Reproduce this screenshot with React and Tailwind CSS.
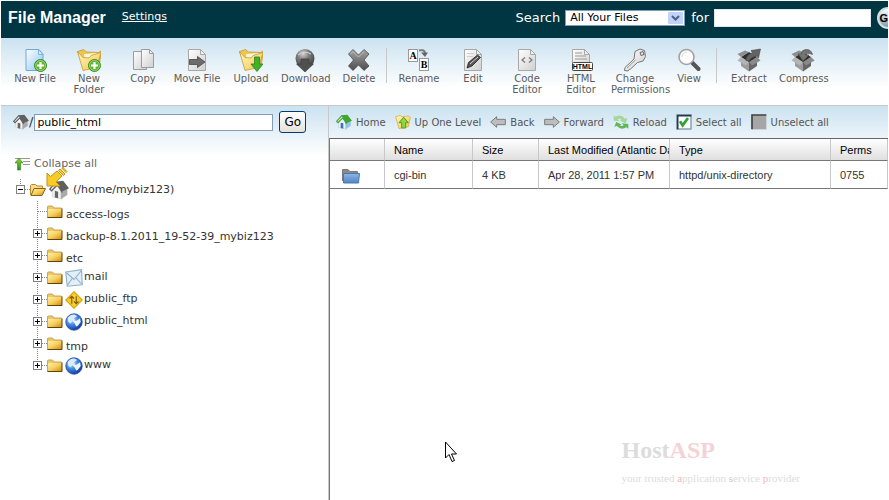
import React, { useState } from "react";

/* Shared gradients for the icons */
function IconDefs() {
  return (
    <svg className="absolute h-0 w-0" aria-hidden="true">
      <defs>
        <linearGradient id="gold" x1="0" y1="0" x2="1" y2="1">
          <stop offset="0" stopColor="#fdf0a6" />
          <stop offset="0.5" stopColor="#f7cf5e" />
          <stop offset="1" stopColor="#d08a10" />
        </linearGradient>
        <linearGradient id="paleGold" x1="0" y1="0" x2="1" y2="1">
          <stop offset="0" stopColor="#fff6bd" />
          <stop offset="1" stopColor="#f1c74f" />
        </linearGradient>
        <linearGradient id="paper" x1="0" y1="0" x2="1" y2="1">
          <stop offset="0" stopColor="#ffffff" />
          <stop offset="1" stopColor="#cfcfcf" />
        </linearGradient>
        <linearGradient id="bluePaper" x1="0" y1="0" x2="1" y2="1">
          <stop offset="0" stopColor="#ffffff" />
          <stop offset="1" stopColor="#8cc4ee" />
        </linearGradient>
        <linearGradient id="steel" x1="0" y1="0" x2="0" y2="1">
          <stop offset="0" stopColor="#a5a5a5" />
          <stop offset="1" stopColor="#4c4c4c" />
        </linearGradient>
        <radialGradient id="ball" cx="0.4" cy="0.25" r="0.8">
          <stop offset="0" stopColor="#d5d5d5" />
          <stop offset="0.4" stopColor="#7c7c7c" />
          <stop offset="1" stopColor="#383838" />
        </radialGradient>
        <radialGradient id="globe" cx="0.35" cy="0.3" r="0.8">
          <stop offset="0" stopColor="#c9e4ff" />
          <stop offset="0.5" stopColor="#3d83dc" />
          <stop offset="1" stopColor="#0a2b8c" />
        </radialGradient>
        <linearGradient id="green" x1="0" y1="0" x2="0" y2="1">
          <stop offset="0" stopColor="#8ed63c" />
          <stop offset="1" stopColor="#2c8a1a" />
        </linearGradient>
        <linearGradient id="blueFolder" x1="0" y1="0" x2="0" y2="1">
          <stop offset="0" stopColor="#8db6e6" />
          <stop offset="1" stopColor="#4f86c6" />
        </linearGradient>
      </defs>
    </svg>
  );
}

function Svg({ size = 24, children }) {
  return (
    <svg
      width={size}
      height={size}
      viewBox="0 0 24 24"
      className="block shrink-0"
      aria-hidden="true"
    >
      {children}
    </svg>
  );
}

function PlusBadge() {
  return (
    <g>
      <circle cx="17.5" cy="17.5" r="6" fill="#5fb336" stroke="#3a8a22" />
      <circle cx="17.5" cy="17.5" r="5" fill="none" stroke="#b4e08f" strokeWidth="0.7" />
      <path d="M17.5 14v7M14 17.5h7" stroke="#fff" strokeWidth="2.2" />
    </g>
  );
}

function Sheet() {
  return (
    <g>
      <path d="M3.5 1.5h12l5 5v16h-17z" fill="url(#paper)" stroke="#a8a8a8" />
      <path d="M15.5 1.5v5h5z" fill="#eee" stroke="#a8a8a8" />
    </g>
  );
}

function OpenFolder() {
  return (
    <g>
      <path d="M.5 3.500l6-2 3 2.500 12 .500 3-2-2 13-15 5z" fill="#efc452" stroke="#c39a34" strokeWidth="0.8" />
      <path d="M7 6l13-1 2 2-2 8H8z" fill="#fff8d6" />
      <path d="M.5 3.500L6 9.500l6 .5 2-2.500 10-3-4.500 15L6 22.500z" fill="url(#paleGold)" stroke="#c39a34" strokeWidth="0.8" />
    </g>
  );
}

function NewFileIcon() {
  return (
    <Svg>
      <path d="M3 1.500h13l4 4.500v16.500H3z" fill="url(#bluePaper)" stroke="#6fa8d4" />
      <path d="M15.500 1.500v5h4.500z" fill="#d8ecfa" stroke="#6fa8d4" strokeWidth="0.8" />
      <PlusBadge />
    </Svg>
  );
}

function NewFolderIcon() {
  return (
    <Svg>
      <OpenFolder />
      <PlusBadge />
    </Svg>
  );
}

function CopyIcon() {
  return (
    <Svg>
      <path d="M2.5 3.500h9l4 4v14h-13z" fill="url(#paper)" stroke="#9c9c9c" />
      <path d="M10.500 1.500h8l4 4v14h-12z" fill="url(#paper)" stroke="#9c9c9c" />
      <path d="M18.500 1.500v4h4z" fill="#eee" stroke="#9c9c9c" />
    </Svg>
  );
}

function MoveIcon() {
  return (
    <Svg>
      <Sheet />
      <path d="M4.500 11.500h8v-3l7.500 5.500-7.500 5.500v-3h-8z" fill="#6c6c6c" stroke="#444" strokeWidth="0.8" />
    </Svg>
  );
}

function UploadIcon() {
  return (
    <Svg>
      <OpenFolder />
      <path d="M15.500 9h5v7h3.500l-6 7.500-6-7.500h3.500z" fill="#43b02a" stroke="#2a8318" strokeWidth="0.8" />
    </Svg>
  );
}

function DownloadIcon() {
  return (
    <Svg>
      <circle cx="12" cy="10.500" r="9.500" fill="url(#ball)" />
      <path d="M8 11h8v5h4.500L12 24l-8.500-8H8z" fill="#505050" stroke="#3a3a3a" strokeWidth="0.6" />
      <path d="M5 7q6-5 13-1" stroke="#d8d8d8" fill="none" />
    </Svg>
  );
}

function DeleteIcon() {
  return (
    <Svg>
      <path
        d="M6 1.500l5.500 5.500L17 1.500l5 4.500-5 6 5 6-5 4.500-5.500-5.500L6 22.500 1.500 18l5-6-5-6z"
        fill="url(#steel)"
        stroke="#4a4a4a"
        strokeWidth="0.8"
      />
      <path d="M3 6l3-2.500 5.500 5.500L17 3.500" fill="none" stroke="#c4c4c4" strokeWidth="0.8" />
    </Svg>
  );
}

function RenameIcon() {
  return (
    <Svg>
      <rect x="1.500" y="1.500" width="9" height="12" fill="#fff" stroke="#999" />
      <rect x="12.500" y="10.500" width="9" height="12" fill="#fff" stroke="#999" />
      <text x="6" y="11" fontFamily="Liberation Serif, serif" fontSize="10" fontWeight="bold" textAnchor="middle">
        A
      </text>
      <text x="17" y="20" fontFamily="Liberation Serif, serif" fontSize="10" fontWeight="bold" textAnchor="middle">
        B
      </text>
      <path d="M12 2.500q6-1.500 6 3" stroke="#777" strokeWidth="2" fill="none" />
      <path d="M14 4.500h7L18 9z" fill="#666" />
    </Svg>
  );
}

function EditIcon() {
  return (
    <Svg>
      <Sheet />
      <path d="M6 5.500h7M6 8.500h6" stroke="#cfcfcf" />
      <path d="M6 20l1.500-5.500L16.500 7l3 2.500L11 18z" fill="#555" stroke="#222" strokeWidth="0.8" />
      <path d="M9 16l8-7" stroke="#d4d4d4" />
    </Svg>
  );
}

function CodeIcon() {
  return (
    <Svg>
      <Sheet />
      <path d="M10 9.500l-3 2.500 3 2.500M14 9.500l3 2.500-3 2.500" stroke="#777" strokeWidth="1.200" fill="none" />
    </Svg>
  );
}

function HtmlIcon() {
  return (
    <Svg>
      <Sheet />
      <path d="M6 5h7M6 8h11M6 11h12" stroke="#999" />
      <rect x="3.500" y="14.500" width="20" height="8" rx="1" fill="#fff" stroke="#444" />
      <text x="13.500" y="21" fontFamily="Liberation Sans, sans-serif" fontSize="7" fontWeight="bold" textAnchor="middle">
        HTML
      </text>
    </Svg>
  );
}

function KeyIcon() {
  return (
    <Svg>
      <path
        d="M12 3.500L17 1l4.500 1.500 1 6-2.500 4.500-5.500 1.500-7 6.500-1.500.5-1 1.500-3.500-.500.500-3L11 11z"
        fill="url(#paper)"
        stroke="#777"
      />
      <path d="M4 20l8.500-8" stroke="#999" />
      <path d="M17 4.500l3-1 1 3-3 1z" fill="#dcebf4" stroke="#666" />
    </Svg>
  );
}

function ViewIcon() {
  return (
    <Svg>
      <path d="M15 14.500l6.500 6.500" stroke="#555" strokeWidth="4" strokeLinecap="round" />
      <circle cx="9.500" cy="9" r="7.500" fill="#fdfdfd" stroke="#a2a2a2" strokeWidth="1.600" />
      <path d="M5 9q0-4.500 5-5" stroke="#dcdcdc" fill="none" />
    </Svg>
  );
}

function BoxBase() {
  return (
    <g>
      <path d="M4 9l8 5v9.500L4 18z" fill="#9c9c9c" />
      <path d="M12 14l8-5v9l-8 5.500z" fill="#666" />
      <path d="M4 9l8-5 8 5-8 5.500z" fill="#2e2e2e" />
      <path d="M4 9l8 5-3 3.500L.5 12.500z" fill="#b4b4b4" />
      <path d="M20 9l-8 5 3 3.500 8.500-5z" fill="#8a8a8a" />
      <path d="M4 9L.5 6 8 2.500l4 1.500z" fill="#8e8e8e" />
    </g>
  );
}

function ExtractIcon() {
  return (
    <Svg>
      <BoxBase />
      <path d="M9 12.500q0-6 6.500-7.500L14 2.500l9.500-1.500L21.500 10l-2-2Q14 9 12 13z" fill="#646464" stroke="#484848" strokeWidth="0.6" />
    </Svg>
  );
}

function CompressIcon() {
  return (
    <Svg>
      <BoxBase />
      <path d="M21.500 6.500Q20 1 14.500 1.500 10.500 2 10 6H7l5 7 6-6h-3.500q.5-3 7-.500z" fill="#747474" stroke="#484848" strokeWidth="0.6" />
    </Svg>
  );
}

function HouseIcon({ size = 16, roof = "#606060", wall = "#f4f4f4", door = "#666", side = "#a9a9a9" }) {
  return (
    <Svg size={size}>
      <path d="M4 11l6-6 6 7v11l-4-1-8-2z" fill={wall} stroke="#bbb" strokeWidth="0.6" />
      <path d="M14 12l8-2v8l-8 5z" fill={side} />
      <path d="M8 2l9-1 7 9-9 4z" fill={roof} />
      <path d="M9 2l-8 9 2 2 7-7 6 9" fill="none" stroke={roof} strokeWidth="1.600" />
      <path d="M7 13l4 1v8l-4-1z" fill={door} />
    </Svg>
  );
}

function FolderIcon() {
  return (
    <svg width="16" height="16" viewBox="0 0 16 16" className="block shrink-0" aria-hidden="true">
      <path d="M.5 3q0-1 1-1h4l1.500 2h7.500v9.500H.5z" fill="#ecc765" stroke="#c9a558" />
      <path d="M1 5h14v8H1z" fill="url(#gold)" />
      <path d="M.5 13.500h14.500v-9" fill="none" stroke="#5d430c" />
    </svg>
  );
}

function OpenFolderSmall() {
  return (
    <svg width="16" height="16" viewBox="0 0 16 16" className="block shrink-0" aria-hidden="true">
      <path d="M.5 13V3.500l1-1h4l1.500 1.500h5.500V7" fill="#f6dc8c" stroke="#b98a2c" />
      <path d="M1 13.500L4 6.500h11.500L12 13.500z" fill="url(#gold)" stroke="#8a6314" />
    </svg>
  );
}

function MailIcon() {
  return (
    <Svg size={18}>
      <path d="M1 4l21-3 1 20-20 2z" fill="#e3eff8" stroke="#8fb0c9" strokeWidth="1.500" />
      <path d="M2 5l10 9L22 2M3 22l7-10M22 20l-8-9" fill="none" stroke="#8fb0c9" strokeWidth="1.500" />
    </Svg>
  );
}

function FtpIcon() {
  return (
    <Svg size={18}>
      <path d="M12 1l11 11-11 11L1 12z" fill="#f9cd2b" stroke="#d6a413" strokeWidth="1.500" />
      <path d="M9 17V8M6 10l3-3 3 3M15 7v9M12 14l3 3 3-3" fill="none" stroke="#7d5f12" strokeWidth="1.500" />
    </Svg>
  );
}

function GlobeIcon() {
  return (
    <Svg size={18}>
      <circle cx="12" cy="12" r="11" fill="url(#globe)" stroke="#1d459c" />
      <path d="M4 6q4-4 8-4l4 2-4 3 2 3-4 1-3 3-3-3z" fill="#d9ecff" />
      <path d="M10 11l6-1 4-3 1 5-4 5-2 1-2-4z" fill="#eef7ff" />
    </Svg>
  );
}

function UpLevelIcon() {
  return (
    <Svg size={16}>
      <path d="M1 4l7-2 2 2 10-1 3 2-3 14-14 3z" fill="url(#paleGold)" stroke="#d2a63a" />
      <path d="M13 5l7 8h-4v8h-6v-8H6z" fill="#8fd83a" stroke="#4f9e22" strokeWidth="1.500" />
    </Svg>
  );
}

function BackIcon() {
  return (
    <Svg size={16}>
      <path d="M1 12l9-8v4h13v8H10v4z" fill="#bdbdbd" stroke="#7c7c7c" strokeWidth="1.500" />
    </Svg>
  );
}

function ForwardIcon() {
  return (
    <Svg size={16}>
      <path d="M23 12l-9-8v4H1v8h13v4z" fill="#bdbdbd" stroke="#7c7c7c" strokeWidth="1.500" />
    </Svg>
  );
}

function ReloadIcon() {
  return (
    <Svg size={16}>
      <path d="M1 2l3 2q8-5 14 3l4-1-3 8-9-4 3-1q-3-3-6-1l3 3-9-1z" fill="#a3d89a" />
      <path d="M23 22l-3-2q-8 5-14-2l-4 1 3-7 8 4-3 1q3 2 6 0l-3-3 10 1z" fill="#5fb857" />
    </Svg>
  );
}

function SelectAllIcon() {
  return (
    <Svg size={16}>
      <rect x="1.500" y="1.500" width="21" height="21" fill="#fff" stroke="#7f95ab" strokeWidth="2" />
      <path d="M2.500 23V2.500H23" fill="none" stroke="#26394d" strokeWidth="2.500" />
      <path d="M6 11l4 6 8-11" fill="none" stroke="#2da32d" strokeWidth="4" />
    </Svg>
  );
}

function UnselectAllIcon() {
  return (
    <Svg size={16}>
      <rect x="1" y="1" width="22" height="22" fill="#a6a6a6" />
      <path d="M1.500 23V1.500H23" fill="none" stroke="#444" strokeWidth="2.500" />
    </Svg>
  );
}

const toolGroups = [
  [
    { label: "New File", icon: <NewFileIcon /> },
    { label: "New Folder", icon: <NewFolderIcon /> },
    { label: "Copy", icon: <CopyIcon /> },
    { label: "Move File", icon: <MoveIcon /> },
    { label: "Upload", icon: <UploadIcon /> },
    { label: "Download", icon: <DownloadIcon /> },
    { label: "Delete", icon: <DeleteIcon /> },
  ],
  [
    { label: "Rename", icon: <RenameIcon /> },
    { label: "Edit", icon: <EditIcon /> },
    { label: "Code Editor", icon: <CodeIcon /> },
    { label: "HTML Editor", icon: <HtmlIcon /> },
    { label: "Change Permissions", icon: <KeyIcon /> },
    { label: "View", icon: <ViewIcon /> },
  ],
  [
    { label: "Extract", icon: <ExtractIcon /> },
    { label: "Compress", icon: <CompressIcon /> },
  ],
];

const navActions = [
  { label: "Home", icon: <HouseIcon roof="#3fa535" door="#2f78c4" side="#8ec4ec" /> },
  { label: "Up One Level", icon: <UpLevelIcon /> },
  { label: "Back", icon: <BackIcon /> },
  { label: "Forward", icon: <ForwardIcon /> },
  { label: "Reload", icon: <ReloadIcon /> },
  { label: "Select all", icon: <SelectAllIcon /> },
  { label: "Unselect all", icon: <UnselectAllIcon /> },
];

const folders = [
  { name: "access-logs", leaf: true },
  { name: "backup-8.1.2011_19-52-39_mybiz123" },
  { name: "etc" },
  { name: "mail", icon: <MailIcon /> },
  { name: "public_ftp", icon: <FtpIcon /> },
  { name: "public_html", icon: <GlobeIcon /> },
  { name: "tmp" },
  { name: "www", icon: <GlobeIcon /> },
];

const files = [
  {
    name: "cgi-bin",
    size: "4 KB",
    modified: "Apr 28, 2011 1:57 PM",
    type: "httpd/unix-directory",
    perms: "0755",
  },
];

function Header() {
  return (
    <header className="flex h-[37px] items-center overflow-hidden bg-[#003542] pb-1 pl-[7px] text-white">
      <h1 className="font-['Liberation_Sans',Arial,sans-serif] text-base font-bold whitespace-nowrap">
        File Manager
      </h1>
      <a href="#settings" className="ml-4 text-[11px] underline">
        Settings
      </a>
      <form
        className="-mr-[11px] ml-auto flex shrink-0 items-center text-[13px]"
        onSubmit={(e) => e.preventDefault()}
      >
        <label htmlFor="scope">Search</label>
        <div className="relative ml-[5px]">
          <select
            id="scope"
            className="block h-4 w-[120px] appearance-none border border-[#7f9db9] bg-white pl-1 text-[11px] leading-[14px] text-black"
          >
            <option>All Your Files</option>
            <option>File Names Only</option>
          </select>
          <svg
            width="15"
            height="12"
            viewBox="0 0 15 12"
            className="pointer-events-none absolute top-[2px] right-[2px]"
            aria-hidden="true"
          >
            <rect width="15" height="12" rx="1" fill="#c1d3fb" />
            <path d="M4 4l3.500 3.500L11 4" fill="none" stroke="#4d6185" strokeWidth="2" />
          </svg>
        </div>
        <label htmlFor="query" className="ml-[6px]">
          for
        </label>
        <input
          id="query"
          type="text"
          className="ml-[5px] h-[18px] w-[157px] border border-[#dfe9ee] bg-white px-1 text-xs text-black"
        />
        <button
          type="submit"
          className="ml-[6px] h-[22px] w-[22px] rounded-full border-2 border-[#cfe0e4] bg-linear-to-b from-white to-[#7e9ca4] font-['Liberation_Sans',Arial,sans-serif] text-[11px] leading-[18px] font-bold text-black"
        >
          GO
        </button>
      </form>
    </header>
  );
}

function Toolbar() {
  return (
    <nav className="flex h-[68px] border-b border-[#c8c8c8] bg-[linear-gradient(#cbe2f0,#ffffff_50px)] pt-[10px] pl-[7px]">
      {toolGroups.map((group, index) => (
        <div key={index} className="flex">
          {index > 0 && <div className="mr-[5px] h-[35px] w-px bg-[#c8c8c8]" />}
          {group.map((tool) => (
            <button
              key={tool.label}
              type="button"
              className="flex w-[54px] flex-col items-center text-[10px] leading-[11px] text-[#5c5c5c]"
            >
              {tool.icon}
              <span className="mt-px w-12">{tool.label}</span>
            </button>
          ))}
        </div>
      ))}
    </nav>
  );
}

/* Dotted connector with the expand box */
function TreeJoint({ leaf, last }) {
  return (
    <svg width="15" height="22" viewBox="0 0 15 22" className="block shrink-0" aria-hidden="true">
      <path d={last ? "M5.500 0v11" : "M5.500 0v22"} stroke="#888" strokeDasharray="1 1" />
      <path d="M6 10.500h9" stroke="#888" strokeDasharray="1 1" />
      {!leaf && (
        <g>
          <rect x="1.500" y="6.500" width="8" height="8" fill="#fff" stroke="#808080" />
          <path d="M3 10.500h5M5.500 8v5" stroke="#000" />
        </g>
      )}
    </svg>
  );
}

function FolderTree() {
  return (
    <div className="relative mt-[7px] text-[11px] text-[#333]">
      <div className="flex h-[22px] items-center pl-[14px]">
        <button type="button" aria-label="Collapse home" className="shrink-0">
          <svg width="15" height="22" viewBox="0 0 15 22" className="block">
            <path d="M5.500 0v6M10 10.500h5" stroke="#888" strokeDasharray="1 1" />
            <rect x="1.500" y="6.500" width="8" height="8" fill="#fff" stroke="#808080" />
            <path d="M3 10.500h5" stroke="#000" />
          </svg>
        </button>
        <OpenFolderSmall />
        <span className="ml-[3px]">
          <HouseIcon size={20} />
        </span>
        <a href="#home" className="ml-1 pt-px">
          (/home/mybiz123)
        </a>
      </div>
      <ul className="pl-[31px]">
        {folders.map((folder, index) => (
          <li key={folder.name} className="flex h-[22px] items-center">
            {folder.leaf ? (
              <TreeJoint leaf />
            ) : (
              <button type="button" aria-label={"Expand " + folder.name}>
                <TreeJoint last={index === folders.length - 1} />
              </button>
            )}
            <FolderIcon />
            {folder.icon && <span className="ml-[2px]">{folder.icon}</span>}
            <a href={"#" + folder.name} className={folder.icon ? "ml-px pb-[2px]" : "ml-[3px] pt-[6px]"}>
              {folder.name}
            </a>
          </li>
        ))}
      </ul>
      <svg
        width="22"
        height="20"
        viewBox="0 0 22 20"
        className="absolute -top-3 left-[45px]"
        aria-hidden="true"
      >
        <path d="M1 19V6l3.500 3.500L11 4l5 5-6 6 4 4z" fill="#f8cb28" stroke="#c8921a" />
        <path d="M12.500 3.500l1.500-1.500 5 5-1.500 1.500z" fill="#f8cb28" stroke="#c8921a" />
        <path d="M16 1.500l1-1 4 4-1 1z" fill="#f8cb28" stroke="#c8921a" />
      </svg>
    </div>
  );
}

function Sidebar() {
  const [path, setPath] = useState("public_html");

  return (
    <aside className="w-[328px] shrink-0 border-r border-[#c8c8c8] pt-[5px]">
      <form className="flex items-center pl-3" onSubmit={(e) => e.preventDefault()}>
        <HouseIcon />
        <label htmlFor="path" className="text-[13px] text-[#333]">
          /
        </label>
        <input
          id="path"
          type="text"
          value={path}
          onChange={(e) => setPath(e.target.value)}
          className="ml-px h-[17px] w-[239px] border border-[#7f9db9] bg-white px-[2px] text-[11px] text-black"
        />
        <button
          type="submit"
          className="ml-[6px] h-[22px] w-[27px] rounded-[3px] border border-[#003c74] bg-linear-to-b from-white to-[#e4e2da] text-xs leading-5 text-black"
        >
          Go
        </button>
      </form>
      <button type="button" className="mt-[23px] ml-[14px] flex items-center text-[11px] leading-4 text-[#666]">
        <svg width="16" height="14" viewBox="0 0 16 14" className="mr-[3px] block" aria-hidden="true">
          <path d="M0 1.500h15M8 4.500h7M8 7.500h7" stroke="#999" />
          <path d="M4 1l4 5H5.500v7h-3V6H0z" fill="url(#green)" stroke="#2c8a1a" strokeWidth="0.600" />
        </svg>
        Collapse all
      </button>
      <FolderTree />
    </aside>
  );
}

function FileTable() {
  return (
    <table className="w-full table-fixed border-separate border-spacing-0 border-t border-[#666] bg-white text-left font-['Liberation_Sans',Arial,sans-serif] text-[11px] text-black">
      <colgroup>
        <col className="w-[55px]" />
        <col className="w-[88px]" />
        <col className="w-[66px]" />
        <col className="w-[131px]" />
        <col className="w-[161px]" />
        <col />
      </colgroup>
      <thead>
        <tr className="h-[22px] bg-linear-to-b from-white to-[#dedede] *:overflow-hidden *:border-r *:border-b *:border-r-[#c8c8c8] *:border-b-[#777] *:pt-[2px] *:pl-[9px] *:font-normal *:whitespace-nowrap">
          <th aria-label="Icon"></th>
          <th>Name</th>
          <th>Size</th>
          <th>Last Modified (Atlantic Da</th>
          <th>Type</th>
          <th>Perms</th>
        </tr>
      </thead>
      <tbody>
        {files.map((file) => (
          <tr
            key={file.name}
            className="h-7 text-[#333] *:overflow-hidden *:border-r *:border-b *:border-r-[#c8c8c8] *:border-b-[#777] *:pt-[2px] *:pl-[9px] *:whitespace-nowrap"
          >
            <td>
              <svg width="20" height="16" viewBox="0 0 20 16" className="ml-[2px] block" aria-hidden="true">
                <path d="M1.500 13V1.500h5.500l2 2h7.500V7" fill="#8a8a8a" stroke="#7a7a7a" />
                <path d="M2.500 5.500h16l-1 9.500h-15z" fill="url(#blueFolder)" stroke="#4a78b0" />
              </svg>
            </td>
            <td>{file.name}</td>
            <td>{file.size}</td>
            <td>{file.modified}</td>
            <td>{file.type}</td>
            <td>{file.perms}</td>
          </tr>
        ))}
      </tbody>
    </table>
  );
}

function Watermark() {
  return (
    <div className="mt-auto mr-[88px] mb-3 self-end font-['Liberation_Serif','Times_New_Roman',serif] text-[#dddcdd]">
      <div className="mb-1 text-2xl leading-7 font-bold">
        Host<span className="text-[#f3d3d5]">ASP</span>
      </div>
      <div className="text-[11px] leading-5">
        your trusted <span className="text-[#f0b8bc]">a</span>pplication{" "}
        <span className="text-[#f0b8bc]">s</span>ervice <span className="text-[#f0b8bc]">p</span>rovider
      </div>
    </div>
  );
}

function App() {
  return (
    <div className="flex min-h-screen flex-col bg-white px-px pt-px font-['DejaVu_Sans',Verdana,sans-serif]">
      <IconDefs />
      <Header />
      <Toolbar />
      <main className="flex grow bg-[linear-gradient(#cbe2f0,#ffffff_50px)]">
        <Sidebar />
        <section className="flex min-w-0 grow flex-col">
          <div className="flex h-8 items-center gap-[9px] overflow-hidden pl-[7px]">
            {navActions.map((action) => (
              <button
                key={action.label}
                type="button"
                className="flex shrink-0 items-center gap-1 text-[10px] whitespace-nowrap text-[#555]"
              >
                {action.icon}
                {action.label}
              </button>
            ))}
          </div>
          <div className="flex grow flex-col border-l border-[#777] bg-white">
            <FileTable />
            <Watermark />
          </div>
        </section>
      </main>
      {/* Mouse pointer */}
      <svg
        width="13"
        height="22"
        viewBox="0 0 13 22"
        className="absolute top-[441px] left-[445px]"
        aria-hidden="true"
      >
        <path d="M.5 1v16l3.500-3.500 3 7 2.500-1-3-6.500h5z" fill="#fff" stroke="#000" />
      </svg>
    </div>
  );
}

export default App;
